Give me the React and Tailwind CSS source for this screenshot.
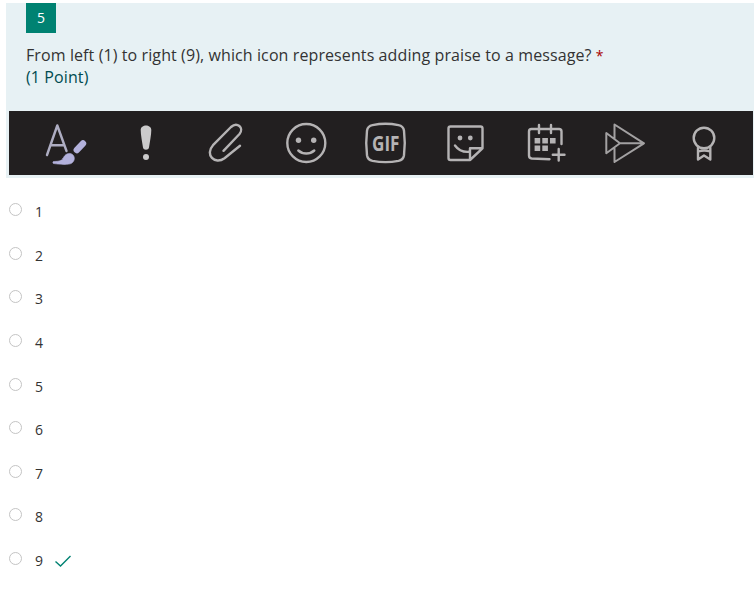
const OPTIONS = [1, 2, 3, 4, 5, 6, 7, 8, 9];
const CORRECT = 9;

function ToolIcon({ children }) {
  return (
    <svg
      viewBox="0 0 80 64"
      className="h-16 w-20 shrink-0 text-[#b5b3b4]"
      fill="none"
      stroke="currentColor"
      strokeWidth="2.4"
      strokeLinecap="round"
      strokeLinejoin="round"
    >
      {children}
    </svg>
  );
}

function MessageToolbar() {
  return (
    <div className="flex h-16 overflow-hidden bg-[#221f20] pl-[17px]">
      {/* format */}
      <ToolIcon>
        <path d="M21 44 31.3 14.5 40.5 40M24.5 34.3H38" stroke="#aeadc2" />
        <path d="M57 32.5 50.8 39" stroke="#b3b1dc" strokeWidth="6.4" />
        <path d="M37 47.5c1.500-4.500 6.500-6.500 9.500-4 3 2.600 2 7-1 8.800-3 1.700-11 1.200-18 .2-.8-.2-.8-1.800 0-2 4-.2 8-.2 9.500-3z" fill="#b3b1dc" stroke="#b3b1dc" strokeWidth="0.600" />
      </ToolIcon>
      {/* importance */}
      <ToolIcon>
        <path d="M34.700 19c0-6 10.600-6 10.600 0 0 5-1.500 12-2.300 17.500-.5 3-5.500 3-6 0-.8-5.500-2.300-12.500-2.300-17.500z" fill="#cbcacb" stroke="none" />
        <circle cx="40" cy="46" r="3" fill="#cbcacb" stroke="none" />
      </ToolIcon>
      {/* attach */}
      <ToolIcon>
        <path d="M37.500 39.800 53.500 23c5-6.500-2.500-12.500-8.500-7L27 34.200c-8.500 9.500 1.800 20 11.500 13L54 34.800" />
      </ToolIcon>
      {/* emoji */}
      <ToolIcon>
        <circle cx="40.300" cy="32" r="19" />
        <circle cx="32.500" cy="29.300" r="2.700" fill="currentColor" stroke="none" />
        <circle cx="47.700" cy="29.300" r="2.700" fill="currentColor" stroke="none" />
        <path d="M32.300 39.500c4.500 4 11.500 4 16 0" />
      </ToolIcon>
      {/* gif */}
      <ToolIcon>
        <path d="M26.500 14.200c8-1.700 18-1.700 26 0 3.300.7 5 2.300 5.500 5.500 1 8 1 16.500 0 24.500-.5 3.300-2.200 5-5.500 5.700-8 1.500-18 1.500-26 0-3.300-.7-5-2.400-5.500-5.700-1-8-1-16.500 0-24.500.5-3.200 2.200-4.800 5.500-5.500z" />
        <text
          x="26"
          y="39.500"
          textLength="27.500"
          lengthAdjust="spacingAndGlyphs"
          className="font-['Open_Sans',sans-serif] text-[20.5px] font-bold"
          fill="currentColor"
          stroke="none"
        >
          GIF
        </text>
      </ToolIcon>
      {/* sticker */}
      <ToolIcon>
        <path d="M44 49H24.500q-2 0-2-2V17.500q0-2 2-2H54.500q2 0 2 2V37.300L44 49V37.300H56.500" />
        <circle cx="34" cy="27" r="2.400" fill="currentColor" stroke="none" />
        <circle cx="44.300" cy="27" r="2.400" fill="currentColor" stroke="none" />
        <path d="M29 34.500c3.200 4.500 8 6.800 14 6.300" />
      </ToolIcon>
      {/* meeting */}
      <ToolIcon>
        <path d="M55.500 33V20.500q0-2.500-2.500-2.500H25.500Q23 18 23 20.500V44.500q0 2.700 2.700 3L43.500 48.300M33 14v8M45 14v8" />
        <path d="M28.600 27h5.600v5.400h-5.600zM36.300 27h5.600v5.400h-5.600zM44 27h5.600v5.400H44zM28.600 34.500h5.600v5.400h-5.600zM36.300 34.500h5.600v5.400h-5.600z" fill="currentColor" stroke="none" />
        <path d="M52.700 38v11.500M46.800 43.700h11.700" />
      </ToolIcon>
      {/* stream */}
      <ToolIcon>
        <path d="M28.500 27.500V13.500L58 32.300 28.500 51V37.500M20.300 22V42.300L34 32.300zM34 32.300H58" stroke="#a3a1a2" strokeWidth="2" />
      </ToolIcon>
      {/* praise */}
      <ToolIcon>
        <circle cx="38" cy="27" r="10.300" />
        <path d="M32 36.500V48.500L38 44.500 44.300 48.500V36.500M32.500 40.500c3.500-1.300 8-1.300 11.500 0" />
      </ToolIcon>
    </div>
  );
}

function QuestionHeader() {
  return (
    <div className="ml-1.5 h-[175px] bg-[#e7f1f4] pr-px pl-[3px]">
      <div className="h-[108px] pl-[17px]">
        <div className="flex size-[30px] items-center justify-center bg-[#008272] text-sm text-white">5</div>
        <div className="mt-[11px] text-base leading-[22px] tracking-[0.1px] whitespace-nowrap text-[#333]">
          From left (1) to right (9), which icon represents adding praise to a message?{' '}
          <span className="text-sm leading-none text-[#a80000]">*</span>
        </div>
        <div className="text-base leading-[22px] tracking-[0.1px] text-[#004b50]">(1 Point)</div>
      </div>
      <MessageToolbar />
    </div>
  );
}

function Option({ value }) {
  return (
    <label className="flex h-[43.65px] items-start pl-[9px]">
      <span className="mt-[15px] size-[13px] rounded-full border border-[#c4c4c4]" />
      <span className="mt-[13px] ml-[13px] text-sm leading-[22px] text-[#333]">{value}</span>
      {value === CORRECT && (
        <svg viewBox="0 0 16 12" className="mt-[18px] ml-3 h-3 w-4" fill="none" stroke="#008272" strokeWidth="1.400">
          <path d="M.5 6.500 5.500 11 15.500 1" />
        </svg>
      )}
    </label>
  );
}

export default function App() {
  return (
    <main className="h-[594px] w-[754px] overflow-hidden bg-white pt-[3px] font-['Open_Sans',sans-serif]">
      <QuestionHeader />
      <div className="pt-[10px]">
        {OPTIONS.map((value) => (
          <Option key={value} value={value} />
        ))}
      </div>
    </main>
  );
}
